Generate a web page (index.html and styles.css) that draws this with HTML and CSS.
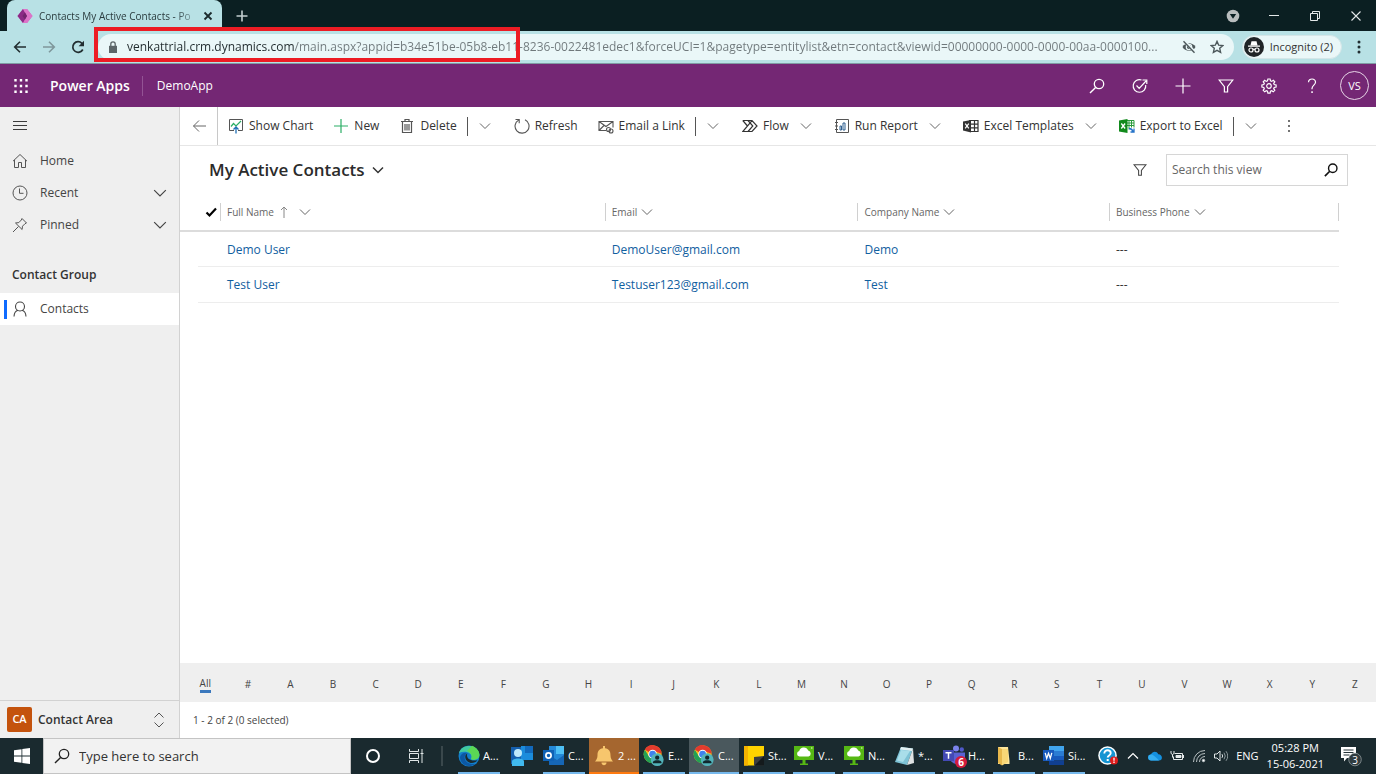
FILE: index.html
```html
<!DOCTYPE html>
<html lang="en">
<head>
<meta charset="utf-8">
<meta name="viewport" content="width=device-width, initial-scale=1">
<title>Contacts My Active Contacts - Power Apps</title>
<link rel="stylesheet" href="styles.css">
</head>
<body>
<svg class="defs" aria-hidden="true">
  <defs>
    <symbol id="chev" viewBox="0 0 12 12"><path d="M1 3.500 6 8.500 11 3.500" fill="none" stroke="currentColor"/></symbol>
    <symbol id="search" viewBox="0 0 16 16"><circle cx="10" cy="6" r="4.700" fill="none" stroke="currentColor" stroke-width="1.300"/><path d="M6.600 9.400 1 15" stroke="currentColor" stroke-width="1.400"/></symbol>
    <symbol id="funnel" viewBox="0 0 16 16"><path d="M1.200 2h13.600L9.600 8.600V14H6.400V8.600Z" fill="none" stroke="currentColor" stroke-width="1.200"/></symbol>
    <symbol id="chrome" viewBox="0 0 24 24">
      <circle cx="10.500" cy="10" r="9.800" fill="#fbc116"/>
      <path d="M10.500 10 2 5.100A9.800 9.800 0 0 1 20.300 9.500L10.500 6Z" fill="#e33b2e"/>
      <path d="M2 5.100 6.500 12.500 10.500 14 9.500 19.800A9.800 9.800 0 0 1 2 5.100Z" fill="#22a055"/>
      <circle cx="10.500" cy="10" r="4.700" fill="#fff"/><circle cx="10.500" cy="10" r="3.700" fill="#3f82ee"/>
      <circle cx="15.500" cy="16" r="7" fill="#52b3ba"/><circle cx="15.500" cy="13.800" r="2.300" fill="#10282d"/><path d="M10.900 20v-1.200c0-2.800 9.200-2.800 9.200 0V20Z" fill="#10282d"/>
    </symbol>
    <symbol id="cloudpc" viewBox="0 0 22 22"><path d="M1 1h20v14H1Z" fill="#56b814"/><path d="M9.500 15h3v4h-3ZM7 18.500h8V20H7Z" fill="#56b814"/><path d="M6.500 11.500a2.800 2.800 0 0 1-.3-5.500 4.800 4.800 0 0 1 9-.5 3.100 3.100 0 0 1 .3 6Z" fill="#fff"/><circle cx="18.800" cy="3" r=".8" fill="#d9f5b8"/></symbol>
  </defs>
</svg>

<header class="browser">
  <div class="tabstrip">
    <div class="tab">
      <svg class="i16" viewBox="0 0 16 16"><path d="M6 1h4l5.500 7L10 15H6L.5 8Z" fill="#c65cb8"/><path d="M6 1 .5 8 6 15l4-7Z" fill="#8c2a86"/><path d="M10 1 6 1l4 7-4 7h4l5.500-7Z" fill="#dc74c8"/><path d="m8 4.500 2 3.500-2 3.500L5.500 8Z" fill="#74246f"/></svg>
      <span class="tab-title">Contacts My Active Contacts - Po</span>
      <button class="bare" aria-label="Close tab"><svg class="i10" viewBox="0 0 10 10"><path d="m1.500 1.500 7 7m0-7-7 7" stroke="#1b2a2d" stroke-width="1.800"/></svg></button>
    </div>
    <button class="bare newtab" aria-label="New tab"><svg class="i12" viewBox="0 0 12 12"><path d="M6 .5v11M.5 6h11" stroke="#c3ced0" stroke-width="1.600"/></svg></button>
    <div class="winctl">
      <button class="bare" aria-label="Tab search"><svg class="i14" viewBox="0 0 14 14"><circle cx="7" cy="7" r="6.300" fill="#b9bdbe"/><path d="M3.800 5h6.400L7 9.800Z" fill="#0b1f22"/></svg></button>
      <button class="bare" aria-label="Minimize"><svg class="i12" viewBox="0 0 12 12"><path d="M1 5.500h10" stroke="#e4e8e9"/></svg></button>
      <button class="bare" aria-label="Restore"><svg class="i12" viewBox="0 0 12 12"><path d="M1.500 3.500h7v7h-7ZM3.500 3.500v-2h7v7h-2" fill="none" stroke="#e4e8e9"/></svg></button>
      <button class="bare" aria-label="Close window"><svg class="i12" viewBox="0 0 12 12"><path d="m1.500 1.500 9 9m0-9-9 9" stroke="#e4e8e9" stroke-width="1.100"/></svg></button>
    </div>
  </div>
  <div class="toolbar">
    <div class="navbtns">
      <button class="bare" aria-label="Back"><svg class="i14" viewBox="0 0 14 14"><path d="M13 7H2m5-5.300L1.700 7 7 12.300" fill="none" stroke="#222e31" stroke-width="1.600"/></svg></button>
      <button class="bare" aria-label="Forward"><svg class="i14" viewBox="0 0 14 14"><path d="M1 7h11M7 1.700 12.300 7 7 12.300" fill="none" stroke="#7f979b" stroke-width="1.600"/></svg></button>
      <button class="bare" aria-label="Reload"><svg class="i14" viewBox="0 0 14 14"><path d="M11.800 9.500A5.300 5.300 0 1 1 10.900 3.300L12.500 5" fill="none" stroke="#222e31" stroke-width="1.700"/><path d="M13 .8v5.400H7.600Z" fill="#222e31"/></svg></button>
    </div>
    <div class="omnibox">
      <svg class="i12" viewBox="0 0 12 12"><path d="M2 4.800h8V12H2Z" fill="#5c6669"/><path d="M3.800 5V3a2.200 2.200 0 0 1 4.400 0v2" fill="none" stroke="#5c6669" stroke-width="1.300"/></svg>
      <input class="url" type="text" aria-label="Address" value="venkattrial.crm.dynamics.com/main.aspx?appid=b34e51be-05b8-eb11-8236-0022481edec1&amp;forceUCI=1&amp;pagetype=entitylist&amp;etn=contact&amp;viewid=00000000-0000-0000-00aa-0000100...">
      <button class="bare" aria-label="Tracking blocked"><svg class="i14" viewBox="0 0 14 14"><path d="M.5 7C3 2 11 2 13.500 7 11 12 3 12 .5 7Z" fill="#4d585b"/><circle cx="7" cy="7" r="2.700" fill="#4d585b" stroke="#eaf7f8" stroke-width="1.200"/><path d="m2 .8 11 11.400" stroke="#eaf7f8" stroke-width="2.800"/><path d="m1.500 1.300 11 11.400" stroke="#4d585b" stroke-width="1.400"/></svg></button>
      <button class="bare" aria-label="Bookmark"><svg class="i14" viewBox="0 0 14 14"><path d="m7 1.400 1.700 3.800 4.100.4-3.100 2.700.9 4.100L7 10.300l-3.600 2.100.9-4.100L1.200 5.600l4.100-.4Z" fill="none" stroke="#4d585b" stroke-width="1.400"/></svg></button>
      <span class="highlight"></span>
    </div>
    <button class="incognito">
      <svg class="i20" viewBox="0 0 20 20"><circle cx="10" cy="10" r="10" fill="#202427"/><path d="M6.500 8.300 7.500 4.300h5l1 4ZM4 8.500h12v1.200H4Z" fill="#fff"/><g fill="none" stroke="#fff" stroke-width="1.200"><circle cx="7" cy="13" r="2"/><circle cx="13" cy="13" r="2"/><path d="M9 12.500q1-.7 2 0"/></g></svg>
      <span>Incognito (2)</span>
    </button>
    <button class="bare kebab" aria-label="Browser menu"><svg class="i14" viewBox="0 0 14 14" fill="#222e31"><circle cx="7" cy="2" r="1.500"/><circle cx="7" cy="7" r="1.500"/><circle cx="7" cy="12" r="1.500"/></svg></button>
  </div>
</header>

<div class="suite">
  <button class="bare waffle" aria-label="App launcher"><svg class="i14" viewBox="0 0 14 14"><path d="M1.500 0v14M7 0v14M12.500 0v14" stroke="#fff" stroke-width="2.400" stroke-dasharray="2.600 3.100"/></svg></button>
  <a class="brand" href="#">Power Apps</a>
  <a class="appname" href="#">DemoApp</a>
  <div class="suite-tools">
    <button class="bare" aria-label="Search"><svg class="i16"><use href="#search"/></svg></button>
    <button class="bare" aria-label="Assistant"><svg class="i16" viewBox="0 0 16 16" fill="none" stroke="#fff" stroke-width="1.200"><path d="M9.500 2A6.300 6.300 0 1 0 13.700 7M4.500 7.500l2.700 2.800L14 3M10.500 2h4.300v4"/></svg></button>
    <button class="bare" aria-label="Quick create"><svg class="i16" viewBox="0 0 16 16"><path d="M8 .5v15M.5 8h15" stroke="#fff" stroke-width="1.200"/></svg></button>
    <button class="bare" aria-label="Advanced find"><svg class="i16"><use href="#funnel"/></svg></button>
    <button class="bare" aria-label="Settings"><svg class="i16" viewBox="0 0 16 16" fill="none" stroke="#fff" stroke-width="1.200"><path d="m6.900 1-.4 1.900-1.200.5-1.600-1.100-1.500 1.500 1.100 1.600-.5 1.100-1.900.4v2.200l1.900.4.5 1.200-1.100 1.600 1.500 1.500 1.600-1.100 1.200.5.4 1.900h2.200l.4-1.900 1.200-.5 1.600 1.100 1.500-1.500-1.100-1.600.5-1.200 1.900-.4V6.900l-1.900-.4-.5-1.100 1.100-1.600-1.500-1.500-1.600 1.100-1.200-.5L9.100 1Z"/><circle cx="8" cy="8" r="2.300"/></svg></button>
    <button class="bare" aria-label="Help"><svg class="i16" viewBox="0 0 16 16"><path d="M4.500 4.300C4.500-.2 11.700 0 11.500 4.300 11.400 7 8 7.400 8 10.500v.8" fill="none" stroke="#fff" stroke-width="1.200"/><path d="M7.300 13.300h1.500v1.600H7.300Z" fill="#fff"/></svg></button>
    <button class="bare"><span class="avatar">VS</span></button>
  </div>
</div>

<div class="app">
  <nav class="side">
    <button class="bare burger" aria-label="Site map"><svg class="i16" viewBox="0 0 16 16"><path d="M1 3.500h14M1 7.500h14M1 11.500h14" stroke="#3c3c3c"/></svg></button>
    <a class="navitem" href="#"><svg class="i16" viewBox="0 0 16 16" fill="none" stroke="#555"><path d="M1 8.200 8 1.500l7 6.700M2.500 7v7.500h4v-5h3v5h4V7"/></svg><span>Home</span></a>
    <button class="navitem"><svg class="i16" viewBox="0 0 16 16" fill="none" stroke="#555"><circle cx="8" cy="8" r="7"/><path d="M7.500 3.500v4.800h4"/></svg><span>Recent</span><svg class="i14"><use href="#chev"/></svg></button>
    <button class="navitem"><svg class="i16" viewBox="0 0 16 16" fill="none" stroke="#555"><path d="m10 1.500 4.500 4.500-1.500.7L10.500 9.200l-.4 3.300L3.500 6l3.300-.4L9.300 3ZM6.500 9.500 1 15"/></svg><span>Pinned</span><svg class="i14"><use href="#chev"/></svg></button>
    <h2 class="group">Contact Group</h2>
    <a class="navitem current" href="#" aria-current="page"><svg class="i16" viewBox="0 0 16 16" fill="none" stroke="#444" stroke-width="1.100"><circle cx="8" cy="5.500" r="4.500"/><path d="M2 15.500c.2-3.500 2-5.700 4-6.200M14 15.500c-.2-3.500-2-5.700-4-6.200"/></svg><span>Contacts</span></a>
    <button class="area"><span class="badge">CA</span><span class="area-name">Contact Area</span><svg class="i16" viewBox="0 0 16 16" fill="none" stroke="#555"><path d="m3.500 5.500 4.500-4.500 4.500 4.500M3.500 10.500 8 15l4.500-4.500"/></svg></button>
  </nav>

  <main class="main">
    <div class="commands">
      <button class="cmd-back" aria-label="Go back"><svg class="i14" viewBox="0 0 14 14"><path d="M14 7H1.500M7 1.500 1.500 7 7 12.500" fill="none" stroke="#666"/></svg></button>
      <button class="cmd"><svg class="i16" viewBox="0 0 16 16" fill="none"><path d="M6 12.500H1.500v-11h13v11H10" stroke="#555"/><path d="m3 8.500 2.500-3 2.500 2.500 5-5" stroke="#2bae66" stroke-width="1.200"/><path d="M8 15.500V9M5.500 11.500 8 9l2.500 2.500" stroke="#1f6fb5" stroke-width="1.300"/></svg>Show Chart</button>
      <button class="cmd"><svg class="i16" viewBox="0 0 16 16"><path d="M8 1v14M1 8h14" stroke="#2bae66" stroke-width="1.200"/></svg>New</button>
      <button class="cmd"><svg class="i16" viewBox="0 0 16 16" fill="none" stroke="#555"><path d="M2 3.500h12M6 3.500v-2h4v2M3.500 3.500v11h9v-11M6 6v6.500M8 6v6.500M10 6v6.500" stroke-width="1.200"/></svg>Delete</button>
      <button class="split" aria-label="More delete commands"><svg class="i12"><use href="#chev"/></svg></button>
      <button class="cmd"><svg class="i16" viewBox="0 0 16 16" fill="none" stroke="#555" stroke-width="1.100"><path d="M11 1.800A7 7 0 1 1 4.500 2.100M1.500 1.500h3.700v3.700"/></svg>Refresh</button>
      <button class="cmd"><svg class="i16" viewBox="0 0 16 16" fill="none" stroke="#555" stroke-width="1.100"><path d="M8 12.500H1v-9h14v6M1 3.500l7 5 7-5M1 12.500l5-5"/><circle cx="10.500" cy="11.500" r="2"/><circle cx="13" cy="13" r="2"/></svg>Email a Link</button>
      <button class="split" aria-label="More email commands"><svg class="i12"><use href="#chev"/></svg></button>
      <button class="cmd"><svg class="i16" viewBox="0 0 16 16" fill="none" stroke="#333" stroke-width="1.200"><path d="M.8 2.500H10L15 8l-5 5.500H.8L10 2.700M.8 2.500 5.500 8M6 13.500 10.800 8 6 2.500"/></svg>Flow<svg class="i12 drop"><use href="#chev"/></svg></button>
      <button class="cmd"><svg class="i16" viewBox="0 0 16 16" fill="none" stroke="#555"><path d="M2.500 1.500h12v13h-12ZM1 4.500h3M1 8h3M1 11.500h3"/><path d="M6 8h1.500v4H6ZM9 5h2v7H9Z" stroke="#2d5e8f"/></svg>Run Report<svg class="i12 drop"><use href="#chev"/></svg></button>
      <button class="cmd"><svg class="i16" viewBox="0 0 16 16"><path d="M6 2.500h9v11H6M6 6.200h9M6 9.800h9M11.500 2.500v11" fill="none" stroke="#333" stroke-width="1.200"/><path d="M0 3.500 8 2v12.500L0 12.500Z" fill="#333"/><path d="m2.200 5.700 3.600 4.600m0-4.600-3.600 4.600" stroke="#fff" stroke-width="1.200"/></svg>Excel Templates<svg class="i12 drop"><use href="#chev"/></svg></button>
      <button class="cmd"><svg class="i16" viewBox="0 0 16 16"><path d="M8 2.500h7v7M10 2.500v9M12.500 2.500v7M8 5h7M8 7.500h7" fill="none" stroke="#2a9a3d"/><path d="M0 2.500 8.500 1v14L0 13.500Z" fill="#128a1c"/><path d="m2.300 5.500 3.800 5m0-5-3.800 5" stroke="#fff" stroke-width="1.300"/><path d="M10 10.500q3 0 4 3m1-3v3.500h-3.500" fill="none" stroke="#2472c8" stroke-width="1.300"/></svg>Export to Excel</button>
      <button class="split" aria-label="More export commands"><svg class="i12"><use href="#chev"/></svg></button>
      <button class="cmd-more" aria-label="More commands"><svg class="i14" viewBox="0 0 14 14" fill="#444"><circle cx="7" cy="2" r="1"/><circle cx="7" cy="7" r="1"/><circle cx="7" cy="12" r="1"/></svg></button>
    </div>

    <div class="viewbar">
      <h1 class="viewname"><button class="bare viewbtn">My Active Contacts<svg class="i12" viewBox="0 0 12 12"><path d="M1 3.500 6 8.500 11 3.500" fill="none" stroke="#333" stroke-width="1.500"/></svg></button></h1>
      <button class="bare filterbtn" aria-label="Filter"><svg class="i14"><use href="#funnel"/></svg></button>
      <div class="viewsearch">
        <input type="text" aria-label="Search this view" placeholder="Search this view">
        <button class="bare" aria-label="Start search"><svg class="i14" viewBox="0 0 16 16"><circle cx="10" cy="6" r="4.800" fill="none" stroke="#111" stroke-width="1.600"/><path d="M6.600 9.400 1 15" stroke="#111" stroke-width="1.900"/></svg></button>
      </div>
    </div>

    <table class="grid">
      <colgroup><col class="c-check"><col class="c-name"><col class="c-email"><col class="c-company"><col></colgroup>
      <thead><tr>
        <th><button class="bare" aria-label="Select all"><svg class="i12" viewBox="0 0 12 12"><path d="m1.500 6.500 3 3L11 2.500" fill="none" stroke="#000" stroke-width="2.200"/></svg></button></th>
        <th><button class="colhead">Full Name<svg class="i12" viewBox="0 0 12 12"><path d="M6 12V1M3 4l3-3 3 3" fill="none" stroke="#888"/></svg><svg class="i12 menu"><use href="#chev"/></svg></button></th>
        <th><button class="colhead">Email<svg class="i12"><use href="#chev"/></svg></button></th>
        <th><button class="colhead">Company Name<svg class="i12"><use href="#chev"/></svg></button></th>
        <th><button class="colhead">Business Phone<svg class="i12"><use href="#chev"/></svg></button></th>
      </tr></thead>
      <tbody>
        <tr><td></td><td><a href="#">Demo User</a></td><td><a href="#">DemoUser@gmail.com</a></td><td><a href="#">Demo</a></td><td>---</td></tr>
        <tr><td></td><td><a href="#">Test User</a></td><td><a href="#">Testuser123@gmail.com</a></td><td><a href="#">Test</a></td><td>---</td></tr>
      </tbody>
    </table>

    <div class="jump">
      <button class="on"><span>All</span></button><button>#</button><button>A</button><button>B</button><button>C</button><button>D</button><button>E</button><button>F</button><button>G</button><button>H</button><button>I</button><button>J</button><button>K</button><button>L</button><button>M</button><button>N</button><button>O</button><button>P</button><button>Q</button><button>R</button><button>S</button><button>T</button><button>U</button><button>V</button><button>W</button><button>X</button><button>Y</button><button>Z</button>
    </div>
    <div class="status">1 - 2 of 2 (0 selected)</div>
  </main>
</div>

<footer class="taskbar">
  <button class="start" aria-label="Start"><svg class="i16" viewBox="0 0 16 16" fill="#fff"><path d="M0 2.300 7.500 1.200v6.400H0ZM8.300 1.100 16 0v7.600H8.300ZM0 8.400h7.500v6.400L0 13.700ZM8.300 8.400H16V16l-7.700-1.100Z"/></svg></button>
  <div class="tasksearch"><svg class="i16"><use href="#search"/></svg><input type="text" aria-label="Type here to search" placeholder="Type here to search"></div>
  <button class="sys" aria-label="Cortana"><svg class="i16" viewBox="0 0 16 16"><circle cx="8" cy="8" r="6" fill="none" stroke="#fff" stroke-width="2"/></svg></button>
  <button class="sys" aria-label="Task view"><svg class="i16" viewBox="0 0 16 16" fill="none" stroke="#dfe5e6"><path d="M1.500 1v2.500h9V1M1.500 5.500h9v5h-9ZM1.500 15v-2.500h9V15M14 1v14M12.500 5.500h3"/></svg></button>
  <span class="divider"></span>
  <div class="tasks">
    <button class="task"><svg class="i22" viewBox="0 0 22 22"><circle cx="11" cy="11" r="10.500" fill="#137fcb"/><path d="M1 8C3-.5 18-2.500 21.300 9c1 6-6 7-8.300 5 3-5-5-9.500-12-6Z" fill="#41c9a0"/><path d="M14 .8c7 2.700 9 9.200 6 12.200-2 2-6 2-7 1 2-4-1-7-4-8Z" fill="#5bd755"/><path d="M9 8c-5 4-2 12 8 11-7 5-15 0-15-7 1-4 5-5 7-4Z" fill="#0c58a4"/><path d="M9.500 8.200c-2 4 2 8.800 9.800 7-2 3-7 4-10 1s-2.500-6.500.2-8Z" fill="#1b2a2f"/></svg><span>A...</span></button>
    <button class="task pinned" aria-label="People"><svg class="i22" viewBox="0 0 22 22"><path d="M0 2h10v17H0Z" fill="#155fae"/><path d="M10 1h12v14H10Z" fill="#1b8cdc"/><path d="M14 1h8v7h-8Z" fill="#1269bc"/><circle cx="7" cy="8" r="4" fill="#bfeafc"/><path d="M1 21v-4.500c0-4 12-4 12 0V21Z" fill="#41b9ee"/></svg></button>
    <button class="task"><svg class="i22" viewBox="0 0 22 22"><path d="M6 1h15v18H6Z" fill="#2489d8"/><path d="M13 1h8v8h-8Z" fill="#4ec0f5"/><path d="M6 10l8 5 7-5v10H6Z" fill="#1666b5"/><path d="M0 5h11v11H0Z" fill="#0f61b4"/><circle cx="5.500" cy="10.500" r="2.600" fill="none" stroke="#fff" stroke-width="1.700"/></svg><span>C...</span></button>
    <button class="task alert"><svg class="i22" viewBox="0 0 22 22" fill="#f7c66d"><path d="M10 1h2v2.200c4 .6 5.500 3 5.500 7 0 3 1 4.300 2.500 6.300H2c1.500-2 2.500-3.300 2.500-6.300 0-4 1.500-6.400 5.500-7ZM8.500 17.500h5c0 3.500-5 3.500-5 0Z"/></svg><span>2 ...</span></button>
    <button class="task"><svg class="i22"><use href="#chrome"/></svg><span>E...</span></button>
    <button class="task active"><svg class="i22"><use href="#chrome"/></svg><span>C...</span></button>
    <button class="task"><svg class="i22" viewBox="0 0 22 22"><path d="M1 1h20v10l-9.500 9.500H1Z" fill="#ffd400"/><path d="M1 1h4v19.500H1Z" fill="#f5b400"/><path d="M11 20.500V12l10-1v9.500Z" fill="#3b3f40"/><path d="M11.500 20.500 21 11v9.500Z" fill="#141a1c"/></svg><span>St...</span></button>
    <button class="task"><svg class="i22"><use href="#cloudpc"/></svg><span>V...</span></button>
    <button class="task"><svg class="i22"><use href="#cloudpc"/></svg><span>N...</span></button>
    <button class="task"><svg class="i22" viewBox="0 0 22 22"><path d="M8 2 20 3.500 14 20 2 17Z" fill="#7ec3d6"/><path d="M8 2 20 3.500 19 6 7 4.500Z" fill="#e3eff1"/><path d="M8 5 4 15.500l6 1.500L17 6Z" fill="#a9deea"/><path d="M20 3.500 21 18l-7 2Z" fill="#dfe3e4"/></svg><span>*...</span></button>
    <button class="task"><svg class="i22" viewBox="0 0 22 22"><circle cx="13" cy="3.500" r="3" fill="#7b83eb"/><circle cx="18.800" cy="4.500" r="2.200" fill="#5059c9"/><path d="M7 7.500h15V13c0 6-6 7-9 6-4-1-6-3-6-6Z" fill="#5a62d3"/><path d="M0 5h11v11H0Z" fill="#4349b5"/><path d="M2.500 7.800h6M5.500 7.800v6" stroke="#fff" stroke-width="1.500"/></svg><b class="count">6</b><span>H...</span></button>
    <button class="task"><svg class="i22" viewBox="0 0 22 22"><path d="M5 2h10l1.500 14V19H5Z" fill="#ffe69b"/><path d="M5 2 9 4v16.500L5 18Z" fill="#e8b84c"/><path d="M9 4h6v13l-6 3.500Z" fill="#f9d777"/></svg><span>B...</span></button>
    <button class="task"><svg class="i22" viewBox="0 0 22 22"><path d="M6 1h15v5H6Z" fill="#41a5ee"/><path d="M6 6h15v5H6Z" fill="#2b7cd3"/><path d="M6 11h15v4.500H6Z" fill="#185abd"/><path d="M6 15.500h15V20H6Z" fill="#103f91"/><path d="M0 5h11v11H0Z" fill="#185abd"/><path d="m2.200 7.800 1.500 5.500 1.800-5 1.800 5 1.500-5.500" fill="none" stroke="#fff" stroke-width="1.300"/></svg><span>Si...</span></button>
  </div>
  <div class="tray">
    <svg class="i20" viewBox="0 0 20 20"><circle cx="9.500" cy="9.500" r="9.300" fill="#fff"/><circle cx="9.500" cy="9.500" r="7.800" fill="#1595d3"/><path d="M6.300 7.500C6.300 3 13 3.300 12.700 7.300c-.2 2.300-3 2-3 4.200" fill="none" stroke="#fff" stroke-width="1.900"/><path d="M8.700 13h2v2h-2Z" fill="#fff"/><circle cx="16" cy="14.500" r="4" fill="#e01b1b"/><path d="M16 11.800v3M16 15.600v1.400" stroke="#fff" stroke-width="1.300"/></svg>
    <svg class="i14" viewBox="0 0 14 14"><path d="m2 9.500 5-5 5 5" fill="none" stroke="#fff" stroke-width="1.200"/></svg>
    <svg class="i14" viewBox="0 0 14 14"><path d="M3 11.500a3 3 0 0 1 0-6C4.500 2 9 2 10.300 5.300c4.700.2 4.700 6.200.7 6.200Z" fill="#1490df"/><path d="M3 11.500a3 3 0 0 1-.5-5.900c2-.4 3 .4 8.500 5.900Z" fill="#35aef0"/></svg>
    <svg class="i14" viewBox="0 0 14 14" fill="none" stroke="#e6eaeb"><path d="M4.500 4.500h8v6h-9v-3M13.500 6v3M1 2v2.500q1.500 2 3 0V2M2.500 5.500v3"/><path d="M6 6.500h5v2H6Z" fill="#e6eaeb"/></svg>
    <svg class="i14" viewBox="0 0 14 14" fill="none" stroke="#b9c1c3"><path d="M1.500 13A11.500 11.500 0 0 1 13 1.500M4.500 13A8.500 8.500 0 0 1 13 4.500M7.500 13A5.500 5.500 0 0 1 13 7.500"/><circle cx="11.500" cy="11.500" r="1.200" fill="#fff"/></svg>
    <svg class="i14" viewBox="0 0 14 14" fill="none" stroke="#dfe5e6"><path d="M.5 5h2.500L6 2v10L3 9H.5ZM8 5.200q1.300 1.800 0 3.600"/><path d="M10 3.700q2.500 3.300 0 6.600M12 2.200q3.500 4.800 0 9.600" stroke="#8c989b"/></svg>
    <span class="lang">ENG</span>
    <span class="clock"><time>05:28 PM</time><time>15-06-2021</time></span>
    <button class="bare notif" aria-label="Notifications"><svg class="i22" viewBox="0 0 22 22"><path d="M1 2h15v11H7l-3 3.500V13H1Z" fill="#fff"/><path d="M3.500 5h10M3.500 7.500h10M3.500 10h6" stroke="#26353a"/><circle cx="15" cy="14.500" r="6.300" fill="#2f3b3f" stroke="#8d9799" stroke-width=".8"/></svg><b>3</b></button>
  </div>
</footer>
</body>
</html>
```
FILE: styles.css
```css
* { box-sizing: border-box; }
body {
  margin: 0;
  height: 100vh;
  display: flex;
  flex-direction: column;
  font-family: "Open Sans", "Noto Sans", sans-serif;
  font-size: 12px;
  line-height: 16px;
  color: #333;
  background: #fff;
  overflow: hidden;
}
button, input { font: inherit; color: inherit; }
button { border: 0; background: none; padding: 0; cursor: pointer; white-space: nowrap; }
input { border: 0; background: none; padding: 0; outline: 0; min-width: 0; }
a { color: inherit; text-decoration: none; }
svg { display: block; flex: none; }
.defs { position: absolute; width: 0; height: 0; }
.i10 { width: 10px; height: 10px; }
.i12 { width: 12px; height: 12px; }
.i14 { width: 14px; height: 14px; }
.i16 { width: 16px; height: 16px; }
.i20 { width: 20px; height: 20px; }
.i22 { width: 22px; height: 22px; }
.bare { display: flex; align-items: center; justify-content: center; }

/* Browser chrome */
.tabstrip { display: flex; align-items: center; height: 31px; background: #0b1f22; padding-left: 7px; }
.tab {
  display: flex;
  align-items: center;
  gap: 6px;
  width: 215px;
  height: 31px;
  padding: 0 9px 0 10px;
  background: #b8e1e5;
  border-radius: 8px 8px 0 0;
}
.tab-title {
  flex: 1;
  white-space: nowrap;
  font-size: 10px;
  color: #2a3b3e;
  -webkit-mask-image: linear-gradient(to right, #000 86%, transparent 104%);
  mask-image: linear-gradient(to right, #000 86%, transparent 104%);
}
.newtab { width: 40px; height: 31px; }
.winctl { display: flex; align-items: center; margin-left: auto; }
.winctl .bare { width: 41px; height: 28px; }
.toolbar { display: flex; align-items: center; height: 33px; background: #b8e1e5; border-bottom: 1px solid #7f9ba3; }
.navbtns { display: flex; width: 98px; padding-left: 5px; }
.navbtns .bare { width: 29px; height: 26px; }
.omnibox {
  position: relative;
  display: flex;
  align-items: center;
  flex: 1;
  gap: 8px;
  height: 26px;
  padding: 0 10px 0 9px;
  background: #eaf7f8;
  border-radius: 13px;
}
.omnibox .bare { width: 14px; margin-left: 6px; }
.url {
  flex: 1;
  color: #6a7376;
  background: linear-gradient(to right, #202a2d 167px, #6f787b 167px);
  -webkit-background-clip: text;
  background-clip: text;
  -webkit-text-fill-color: transparent;
}
.highlight { position: absolute; left: -4px; top: -7px; width: 426px; height: 35px; border: 4px solid #ec1c24; pointer-events: none; }
.incognito {
  display: flex;
  align-items: center;
  gap: 6px;
  height: 24px;
  margin-left: 8px;
  padding: 0 8px 0 1px;
  background: #eaf7f8;
  border: 1px solid #d5e6e8;
  border-radius: 12px;
  font-size: 11px;
}
.kebab { width: 34px; height: 26px; }

/* Suite header */
.suite { display: flex; align-items: center; height: 43px; background: #742774; color: #fff; flex: none; }
.waffle { width: 42px; height: 43px; }
.brand { padding: 0 12px 0 8px; font-size: 14px; font-weight: 600; }
.appname { padding-left: 14px; border-left: 1px solid #935394; font-size: 12px; line-height: 20px; }
.suite-tools { display: flex; margin-left: auto; }
.suite-tools .bare { width: 43px; height: 43px; }
.avatar { width: 29px; height: 29px; border: 1px solid #e6d4e6; border-radius: 50%; font-size: 11px; line-height: 27px; }

/* Site map */
.app { display: flex; flex: 1; min-height: 0; }
.side { display: flex; flex-direction: column; width: 180px; flex: none; background: #efefef; border-right: 1px solid #d2d2d2; }
.burger { width: 40px; height: 38px; }
.navitem { display: flex; align-items: center; gap: 12px; height: 32px; padding: 0 12px; width: 100%; text-align: left; color: #444; }
.navitem span { flex: 1; }
.group { margin: 26px 0 10px; padding: 0 12px; font-size: 12px; line-height: 16px; font-weight: 600; color: #333; }
.current { background: linear-gradient(#0f6bff, #0f6bff) 4px 50% / 3px 19px no-repeat #fff; }
.area { display: flex; align-items: center; gap: 6px; height: 38px; margin-top: auto; padding: 0 12px 0 7px; border-top: 1px solid #d2d2d2; font-weight: 600; }
.area-name { flex: 1; text-align: left; }
.badge { width: 25px; height: 25px; border-radius: 2px; background: #c4530d; color: #fff; font-size: 11px; line-height: 24px; }

/* Main */
.main { display: flex; flex-direction: column; flex: 1; min-width: 0; }
.commands { display: flex; height: 39px; border-bottom: 1px solid #e6e6e6; color: #333; }
.cmd-back { display: flex; align-items: center; justify-content: center; width: 38px; border-right: 1px solid #c8c8c8; }
.cmd { display: flex; align-items: center; gap: 5px; padding: 0 10px; }
.drop { margin: 0 2px 0 6px; color: #666; }
.split { display: flex; align-items: center; color: #666; padding: 0 13px 0 0; }
.split::before { content: ""; height: 19px; border-left: 1px solid #555; margin-right: 11px; }
.cmd-more { display: flex; align-items: center; padding: 0 12px; }
.viewbar { display: flex; align-items: center; height: 48px; padding: 0 28px 0 29px; }
.viewname { margin: 0 auto 0 0; font-size: 17px; line-height: 24px; font-weight: 600; color: #2b2b2b; }
.viewbtn { gap: 7px; }
.filterbtn { width: 52px; height: 32px; color: #444; }
.viewsearch { display: flex; align-items: center; width: 182px; height: 32px; padding: 0 9px 0 5px; border: 1px solid #d6d6d6; }
.viewsearch input { flex: 1; }
input::placeholder { color: #666; opacity: 1; }

.grid { width: calc(100% - 37px); border-collapse: collapse; table-layout: fixed; }
.c-check { width: 40px; }
.c-name { width: 33.2%; }
.c-email { width: 21.8%; }
.c-company { width: 21.7%; }
.grid th { height: 37px; padding: 0; border-bottom: 2px solid #dcdcdc; font-weight: 400; text-align: left; }
.grid th .bare { width: 100%; padding-left: 21px; }
.colhead { display: flex; align-items: center; gap: 4px; width: 100%; height: 18px; padding-left: 6px; border-left: 1px solid #d0d0d0; font-size: 10px; color: #666; }
.grid th:last-child .colhead { border-right: 1px solid #d0d0d0; }
.menu { margin-left: 5px; }
.grid td { height: 36px; padding: 0 0 0 7px; }
.grid td a { color: #11609f; }
.grid tbody tr { background: linear-gradient(#ededed, #ededed) 18px 100% / 100% 1px no-repeat; }

.jump { display: flex; height: 39px; margin-top: auto; padding-left: 4px; background: #efefef; font-size: 10px; color: #444; }
.jump button { flex: 1; min-width: 0; padding-top: 3px; }
.on span { display: inline-block; border-bottom: 3px solid #3b78bd; line-height: 13px; }
.status { height: 36px; padding-left: 13px; font-size: 10px; line-height: 36px; color: #444; }

/* Taskbar */
.taskbar { display: flex; height: 36px; flex: none; background: #1a2a2f; color: #fff; }
.start { display: flex; align-items: center; justify-content: center; width: 43px; }
.tasksearch { display: flex; align-items: center; gap: 9px; width: 308px; padding: 0 10px; background: #f2f2f2; border: 1px solid #c4c4c4; color: #222; font-size: 13px; }
.tasksearch input { flex: 1; }
.tasksearch input::placeholder { color: #333; }
.sys { display: flex; align-items: center; justify-content: center; width: 43px; }
.divider { width: 17px; height: 20px; margin: 8px 0; background: linear-gradient(#3a484c, #3a484c) 4px 0 / 2px 100% no-repeat; }
.tasks { display: flex; }
.task { position: relative; display: flex; align-items: center; gap: 3px; width: 50px; padding: 0 0 0 4px; font-size: 11px; }
.task::after { content: ""; position: absolute; left: 4px; right: 4px; bottom: 0; height: 2px; background: #76b9ed; }
.pinned { width: 35px; padding-left: 7px; }
.pinned::after { display: none; }
.alert { background: #a5662f; }
.alert::after { left: 0; right: 0; background: #ff7a0f; }
.active { background: #4a585d; }
.active::after { left: 0; right: 0; }
.count { position: absolute; left: 16px; top: 18px; width: 12px; height: 12px; border-radius: 50%; background: #d31b3c; font-size: 10px; line-height: 12px; text-align: center; }
.tray { display: flex; align-items: center; gap: 8px; margin-left: auto; padding-right: 14px; }
.lang { font-size: 11px; }
.clock { display: flex; flex-direction: column; align-items: center; font-size: 11px; line-height: 16px; }
.notif { position: relative; margin-left: 8px; }
.notif b { position: absolute; right: 4px; bottom: 0; font-size: 10px; line-height: 14px; font-weight: 400; }
```
